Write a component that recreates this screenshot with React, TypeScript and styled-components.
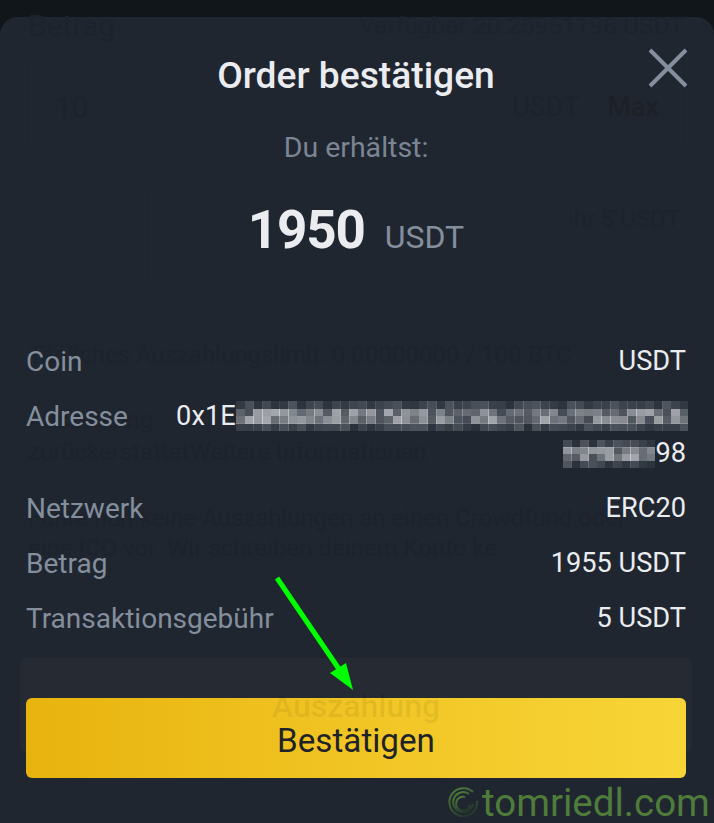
import styled, { createGlobalStyle } from "styled-components";

const GlobalStyle = createGlobalStyle`
  html, body {
    margin: 0;
    padding: 0;
    background: #11161b;
  }
  * {
    box-sizing: border-box;
  }
`;

const Page = styled.div`
  position: relative;
  width: 714px;
  height: 823px;
  overflow: hidden;
  background: #11161b;
  font-family: Roboto, "Liberation Sans", sans-serif;
`;

const Sheet = styled.div`
  position: absolute;
  top: 17px;
  left: 0;
  right: 0;
  bottom: 0;
  background: #1f2630;
  border-radius: 18px 18px 0 0;
  padding: 0 28px 0 26px;
  display: flex;
  flex-direction: column;
`;

// the withdrawal form which shines faintly through the sheet
const Behind = styled.div`
  position: absolute;
  inset: -17px 0 0 0;
  z-index: 1;
  padding: 8px 30px 0 28px;
  display: flex;
  flex-direction: column;
  color: #1c232c;
  pointer-events: none;
`;

const BehindRow = styled.div`
  display: flex;
  justify-content: space-between;
  align-items: center;
  height: 34px;
  white-space: nowrap;
`;

const BehindLabel = styled.span`
  font-size: 30px;
`;

const BehindBalance = styled.span`
  font-size: 24.5px;
`;

const BehindInput = styled.div`
  margin-top: 16px;
  height: 94px;
  display: flex;
  justify-content: space-between;
  align-items: center;
  padding: 4px 24px 0 26px;
  border: 1px solid #1d242d;
  border-radius: 4px;
  font-size: 30px;
`;

const BehindUnit = styled.span`
  display: flex;
  gap: 28px;
  font-size: 27px;
`;

const BehindMax = styled.b`
  font-weight: 500;
  color: #1e2027;
`;

const BehindMiddle = styled.div`
  margin: 38px -28px 0 0;
  display: flex;
  justify-content: space-between;
  padding-left: 119px;
  white-space: nowrap;
`;

const BehindBox = styled.div`
  width: 424px;
  height: 95px;
  border: 1px solid #1d242d;
`;

const BehindFee = styled.span`
  margin: 14px 32px 0 0;
  font-size: 24px;
  line-height: 30px;
`;

const BehindNote = styled.div<{ $top: number }>`
  margin-top: ${(p) => p.$top}px;
  white-space: nowrap;
  font-size: 24px;
  line-height: 30px;
`;

const BehindButton = styled.div`
  position: absolute;
  left: 20px;
  right: 22px;
  top: 641px;
  height: 94px;
  z-index: 1;
  border-radius: 6px;
  background: #252a33;
`;

const Content = styled.div`
  position: relative;
  z-index: 3;
  height: 100%;
  display: flex;
  flex-direction: column;
`;

const Title = styled.h1`
  margin: 37px 0 0;
  height: 42px;
  text-align: center;
  font-size: 37.2px;
  line-height: 42px;
  font-weight: 500;
  color: #eaecef;
`;

const CloseButton = styled.button`
  position: absolute;
  top: 31px;
  right: -2px;
  width: 40px;
  height: 40px;
  padding: 0;
  border: 0;
  background: none;
  color: #848e9c;
  display: flex;
`;

const Hint = styled.div`
  margin-top: 34px;
  text-align: center;
  font-size: 28.5px;
  line-height: 36px;
  color: #7b8594;
`;

const AmountRow = styled.div`
  margin-top: 33px;
  display: flex;
  justify-content: center;
  align-items: baseline;
  gap: 20px;
  height: 62px;
`;

const Amount = styled.span`
  font-size: 53px;
  line-height: 62px;
  font-weight: 700;
  letter-spacing: -1.2px;
  color: #eaecef;
`;

const AmountUnit = styled.span`
  font-size: 32px;
  color: #848e9c;
`;

const Details = styled.div`
  margin-top: 82px;
  display: flex;
  flex-direction: column;
  gap: 18px;
`;

const DetailRow = styled.div`
  display: flex;
  justify-content: space-between;
  gap: 48px;
  font-size: 27.2px;
  line-height: 37px;
`;

const DetailLabel = styled.span`
  font-size: 28px;
  color: #848e9c;
  white-space: nowrap;
`;

const DetailValue = styled.span`
  color: #eaecef;
  text-align: right;
`;

const Mosaic = styled.svg<{ $bleed: number }>`
  display: inline-block;
  vertical-align: -6px;
  margin-right: ${(p) => p.$bleed}px;
`;

const Footer = styled.div`
  position: absolute;
  left: 0;
  right: 0;
  top: 681px;
`;

const ConfirmButton = styled.button`
  position: relative;
  display: block;
  width: 100%;
  height: 80px;
  padding: 0;
  border: 0;
  border-radius: 6px;
  background: linear-gradient(90deg, #e8b30e 0%, #f0c322 45%, #f8d537 100%);
  color: #1e2329;
  font-family: inherit;
  font-size: 33.2px;
  line-height: 86px;
`;

const GhostLabel = styled.span`
  position: absolute;
  left: 0;
  right: 0;
  top: -13px;
  text-align: center;
  font-size: 32px;
  line-height: 42px;
  font-weight: 500;
  color: rgba(0, 0, 0, 0.07);
`;

const Arrow = styled.svg`
  position: absolute;
  left: 270px;
  top: 570px;
  z-index: 5;
`;

const Watermark = styled.div`
  position: absolute;
  left: 447px;
  top: 782px;
  z-index: 5;
  display: flex;
  align-items: center;
  gap: 3px;
  font-size: 38.5px;
  line-height: 42px;
  white-space: nowrap;
  color: #4f7c3b;
`;

const hash = (x: number, y: number, seed: number) => {
  const v = Math.sin(x * 12.9898 + y * 78.233 + seed) * 43758.5453;
  return v - Math.floor(v);
};

type PixelBlockProps = {
  cols: number;
  rows: number;
  cellW: number;
  cellH: number;
  seed: number;
  bleed?: number;
};

const PixelBlock = ({ cols, rows, cellW, cellH, seed, bleed = 0 }: PixelBlockProps) => {
  const cells = [];
  for (let y = 0; y < rows; y++) {
    for (let x = 0; x < cols; x++) {
      const edge = y === 0 || y === rows - 1;
      const amount = edge ? 0.06 + hash(x, y, seed) * 0.2 : 0.2 + hash(x, y, seed) * 0.5;
      cells.push(
        <rect
          key={`${x}-${y}`}
          x={x * cellW}
          y={y * cellH}
          width={cellW + 0.5}
          height={cellH + 0.5}
          fill="#dcdee2"
          opacity={amount}
        />
      );
    }
  }
  const w = cols * cellW;
  const h = rows * cellH;
  return (
    <Mosaic $bleed={bleed} width={w} height={h} viewBox={`0 0 ${w} ${h}`} shapeRendering="crispEdges">
      {cells}
    </Mosaic>
  );
};

const details: [string, string][] = [
  ["Coin", "USDT"],
  ["Netzwerk", "ERC20"],
  ["Betrag", "1955 USDT"],
  ["Transaktionsgebühr", "5 USDT"],
];

const App = () => {
  const [coin, ...rest] = details;
  return (
    <Page>
      <GlobalStyle />
      <Sheet>
        <Behind>
          <BehindRow>
            <BehindLabel>Betrag</BehindLabel>
            <BehindBalance>Verfügbar 20.25951198 USDT</BehindBalance>
          </BehindRow>
          <BehindInput>
            <span>10</span>
            <BehindUnit>
              USDT <BehindMax>Max</BehindMax>
            </BehindUnit>
          </BehindInput>
          <BehindMiddle>
            <BehindBox />
            <BehindFee>hr 5 USDT</BehindFee>
          </BehindMiddle>
          <BehindNote $top={55}>Tägliches Auszahlungslimit: 0.00000000 / 100 BTC</BehindNote>
          <BehindNote $top={35}>Auszahlung</BehindNote>
          <BehindNote $top={2}>zurückerstattetWeitere Informationen</BehindNote>
          <BehindNote $top={36}>Führe nun keine Auszahlungen an einen Crowdfund oder</BehindNote>
          <BehindNote $top={0}>eine ICO vor. Wir schreiben deinem Konto ke</BehindNote>
        </Behind>
        <BehindButton />
        <Content>
          <Title>Order bestätigen</Title>
          <CloseButton aria-label="Schließen">
            <svg width="40" height="40" viewBox="0 0 40 40" fill="none" stroke="currentColor" strokeWidth="4">
              <path d="M2 2 L38 38 M38 2 L2 38" />
            </svg>
          </CloseButton>
          <Hint>Du erhältst:</Hint>
          <AmountRow>
            <Amount>1950</Amount>
            <AmountUnit>USDT</AmountUnit>
          </AmountRow>
          <Details>
            <DetailRow>
              <DetailLabel>{coin[0]}</DetailLabel>
              <DetailValue>{coin[1]}</DetailValue>
            </DetailRow>
            <DetailRow>
              <DetailLabel>Adresse</DetailLabel>
              <DetailValue>
                0x1E
                <PixelBlock cols={52} rows={4} cellW={8.7} cellH={7.5} seed={3} bleed={-2} />
                <br />
                <PixelBlock cols={11} rows={4} cellW={8.4} cellH={7} seed={9} />
                98
              </DetailValue>
            </DetailRow>
            {rest.map(([label, value]) => (
              <DetailRow key={label}>
                <DetailLabel>{label}</DetailLabel>
                <DetailValue>{value}</DetailValue>
              </DetailRow>
            ))}
          </Details>
          <Footer>
            <ConfirmButton>
              <GhostLabel>Auszahlung</GhostLabel>
              Bestätigen
            </ConfirmButton>
          </Footer>
        </Content>
      </Sheet>
      <Arrow width="100" height="130" viewBox="0 0 100 130">
        <path d="M7 8 L71 102" stroke="#00ff00" strokeWidth="5" fill="none" />
        <path d="M83 120 L60 103 L76 93 Z" fill="#00ff00" />
      </Arrow>
      <Watermark>
        <svg width="32" height="36" viewBox="0 0 32 36" fill="none" strokeWidth="2">
          <defs>
            <linearGradient id="logoFade" x1="0.2" y1="0" x2="0.7" y2="1">
              <stop offset="0" stopColor="#4f7c3b" />
              <stop offset="1" stopColor="#22352a" />
            </linearGradient>
          </defs>
          <path d="M26 7 A14 14 0 1 0 28 25 A14 14 0 0 0 30 16" stroke="url(#logoFade)" />
          <path d="M22 9 A10 10 0 1 0 26 19" stroke="url(#logoFade)" />
          <path d="M18 12 A7 7 0 1 0 23 20" stroke="url(#logoFade)" />
        </svg>
        tomriedl.com
      </Watermark>
    </Page>
  );
};

export default App;
